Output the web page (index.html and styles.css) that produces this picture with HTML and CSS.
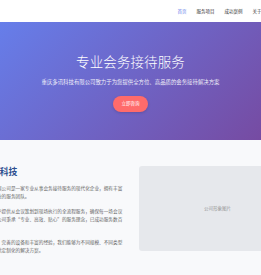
FILE: index.html
```html
<!DOCTYPE html>
<html lang="zh-CN">
<head>
    <meta charset="UTF-8">
    <meta name="viewport" content="width=device-width, initial-scale=1.0">
    <title>重庆多讯科技 | 专业会务接待服务</title>
    <link rel="stylesheet" href="styles.css">
</head>
<body>
    <header class="navbar">
        <div class="container nav-inner">
            <div class="logo">多讯科技</div>
            <nav class="nav-links">
                <a href="#" class="active">首页</a>
                <a href="#">服务项目</a>
                <a href="#">成功案例</a>
                <a href="#">关于我们</a>
                <a href="#">联系我们</a>
            </nav>
        </div>
    </header>

    <section class="hero">
        <div class="container hero-inner">
            <h1>专业会务接待服务</h1>
            <p class="hero-sub">重庆多讯科技有限公司致力于为您提供全方位、高品质的会务接待解决方案</p>
            <a href="#" class="btn-cta">立即咨询</a>
        </div>
    </section>

    <section class="about">
        <div class="container about-grid">
            <div class="about-text">
                <h2>关于多讯科技</h2>
                <p>重庆多讯科技有限公司是一家专业从事会务接待服务的现代化企业，拥有丰富的行业经验和专业的服务团队。</p>
                <p>我们致力于为客户提供从会议策划到现场执行的全流程服务，确保每一场会议都能完美呈现。公司秉承“专业、高效、贴心”的服务理念，已成功服务数百家企业。</p>
                <p>凭借专业的团队、完善的设备和丰富的经验，我们能够为不同规模、不同类型的会议和活动提供定制化的解决方案。</p>
            </div>
            <div class="about-image">公司形象图片</div>
        </div>
    </section>
</body>
</html>
```

FILE: styles.css
```css
:root {
    --primary: #667eea;
    --secondary: #764ba2;
    --accent: #ff6b6b;
    --dark: #333;
    --text: #666;
    --font-main: "Noto Sans CJK SC", "Noto Sans", sans-serif;
}

* {
    box-sizing: border-box;
    margin: 0;
    padding: 0;
}

html,
body {
    overflow: hidden;
}

body {
    font-family: var(--font-main);
    background-color: #f8f9fb;
    color: var(--dark);
    line-height: 1.6;
}

/* секции во всю ширину, контент по центру */
.navbar,
.hero,
.about {
    display: flex;
    justify-content: center;
}

.container {
    flex: none;
    width: 332px;
}

.navbar {
    height: 22px;
    background: white;
    box-shadow: 0 1px 3px rgba(0, 0, 0, 0.06);
}

.nav-inner {
    display: flex;
    align-items: center;
    justify-content: space-between;
    padding-top: 1px;
}

.logo {
    font-size: 8px;
    font-weight: 700;
    color: var(--primary);
}

.nav-links {
    display: flex;
    gap: 10px;
    margin-right: -2px;
}

.nav-links a {
    font-size: 4.5px;
    color: var(--dark);
    text-decoration: none;
}

.nav-links a.active {
    color: var(--primary);
}

.hero {
    height: 118px;
    background: linear-gradient(135deg, var(--primary) 0%, var(--secondary) 100%);
    color: white;
}

.hero-inner {
    display: flex;
    flex-direction: column;
    align-items: center;
    padding-top: 31px;
    text-align: center;
}

.hero h1 {
    font-size: 13.5px;
    font-weight: 300;
    line-height: 17px;
    letter-spacing: 0.1px;
}

.hero-sub {
    margin-top: 8px;
    font-size: 5.4px;
    line-height: 8px;
    opacity: 0.9;
}

.btn-cta {
    margin-top: 10px;
    width: 35px;
    height: 16px;
    display: flex;
    align-items: center;
    justify-content: center;
    background: var(--accent);
    color: white;
    font-size: 4.5px;
    border-radius: 8px;
    text-decoration: none;
    box-shadow: 0 1px 3px rgba(0, 0, 0, 0.15);
}

.about {
    padding-top: 26px;
}

.about-grid {
    display: grid;
    grid-template-columns: 158px 158px;
    gap: 16px;
    align-items: start;
}

.about-text h2 {
    font-size: 8.8px;
    font-weight: 700;
    color: #2d4f8f;
    line-height: 12px;
    margin-bottom: 6px;
}

.about-text p {
    font-size: 4.65px;
    line-height: 8px;
    color: var(--text);
    margin-bottom: 7px;
}

.about-image {
    height: 85px;
    background: #e6e8ec;
    border-radius: 3px;
    display: flex;
    align-items: center;
    justify-content: center;
    font-size: 4.5px;
    color: #999;
}
```
